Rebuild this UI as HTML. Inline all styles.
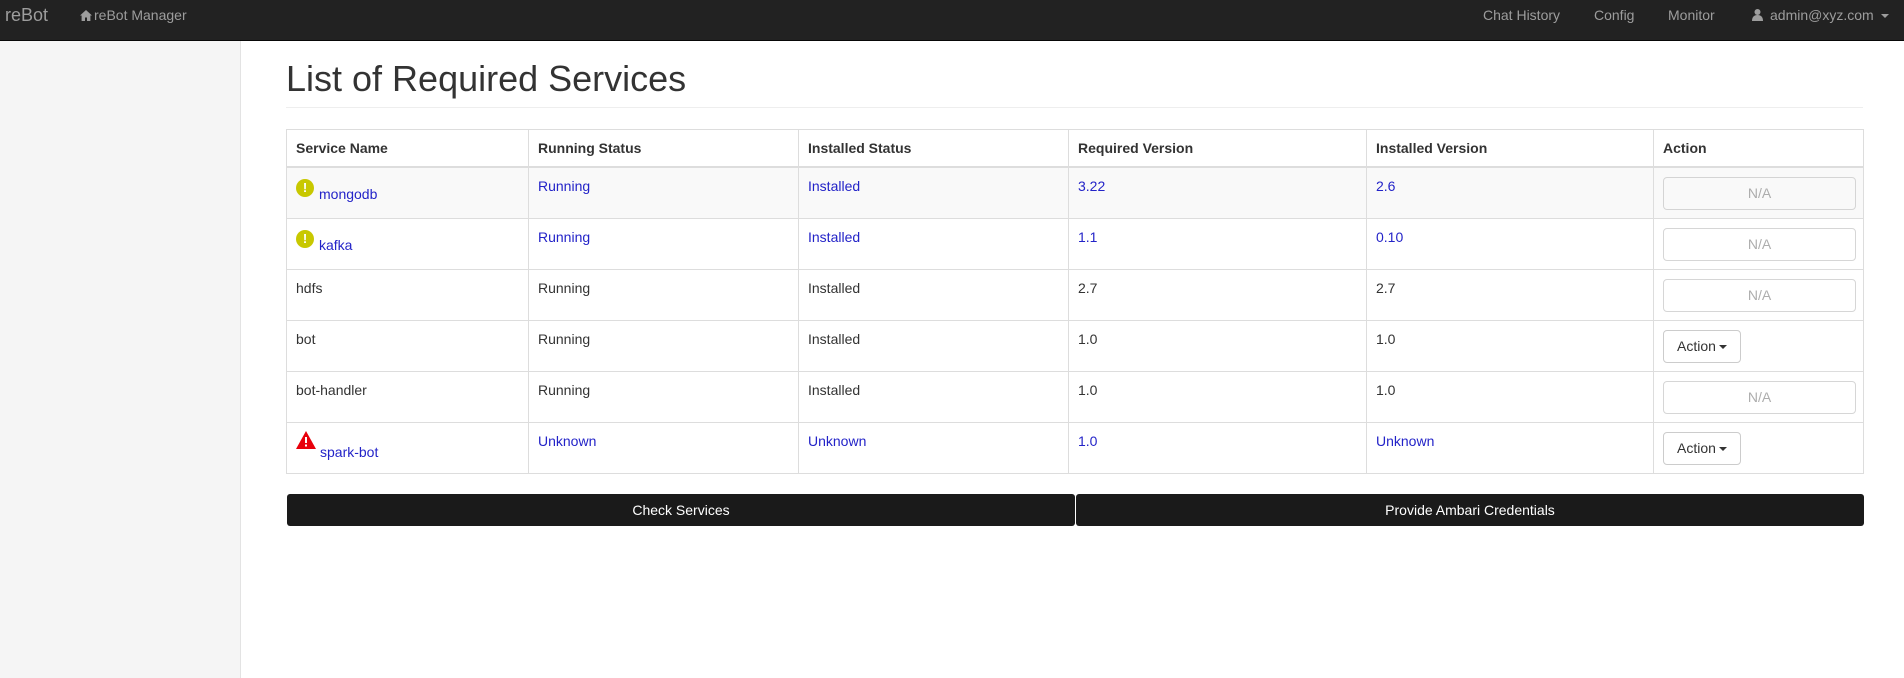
<!DOCTYPE html>
<html><head><meta charset="utf-8"><style>
*{box-sizing:border-box}
body{margin:0;width:1904px;height:678px;overflow:hidden;background:#fff;font-family:"Liberation Sans",Arial,sans-serif;font-size:14px;color:#333;position:relative}
.nav{position:absolute;left:0;top:0;width:1904px;height:41px;background:#222;border-bottom:1px solid #080808;color:#9d9d9d}
.nav span{position:absolute;top:0;line-height:30px}
.side{position:absolute;left:0;top:41px;width:241px;height:637px;background:#f5f5f5;border-right:1px solid #e3e3e3}
h1{position:absolute;left:286px;top:56px;margin:0;font-size:36px;font-weight:normal;line-height:46px;color:#333}
.hr{position:absolute;left:286px;top:107px;width:1577px;border-top:1px solid #eee}
table{position:absolute;left:286px;top:129px;width:1577px;border-collapse:collapse;table-layout:fixed}
td,th{border:1px solid #ddd;padding:8px 9px;text-align:left;vertical-align:top;line-height:20px}
th{height:36px;border-bottom:2px solid #ddd;font-weight:bold;padding-top:8px}
td{height:51px}
tr.s td{background:#f9f9f9}
a{color:#2323c8;text-decoration:none}
.ic{display:inline-block;width:18px;height:18px;border-radius:50%;background:#c8c800;color:#fff;font-weight:bold;font-size:13px;text-align:center;line-height:18px;margin-right:5px;vertical-align:-1px}
.nm{position:relative;top:8px}
.tri{display:inline-block;vertical-align:0px;margin-right:4px}
.na{display:block;width:193px;height:33px;border:1px solid #ccc;border-radius:4px;color:#999;text-align:center;line-height:31px;margin-top:1px;opacity:.8}
.ab{display:inline-block;height:33px;width:78px;border:1px solid #ccc;border-radius:4px;text-align:center;line-height:31px;color:#333;margin-top:1px}
.car{display:inline-block;border-left:4px solid transparent;border-right:4px solid transparent;border-top:4px solid #333;vertical-align:2px;margin-left:3px}
.btn{position:absolute;top:494px;height:32px;background:#1a1a1a;color:#fff;text-align:center;line-height:32px;border-radius:3px;font-size:14px}
</style></head><body>
<div class="nav">
<span style="left:5px;font-size:18px;line-height:30px">reBot</span>
<span style="left:80px"><svg width="12" height="11" viewBox="0 0 12 11" style="vertical-align:-1px;margin-right:2px"><path d="M6 0L0 5.5h1.6V11h3.4V7.5h2V11h3.4V5.5H12z" fill="#9d9d9d"/></svg>reBot Manager</span>
<span style="left:1483px">Chat History</span>
<span style="left:1594px">Config</span>
<span style="left:1668px">Monitor</span>
<span style="left:1752px"><svg width="11" height="12" viewBox="0 0 11 12" style="vertical-align:-1px;margin-right:7px"><circle cx="5.5" cy="3" r="3" fill="#9d9d9d"/><path d="M0 12c0-4 2-6 5.5-6s5.5 2 5.5 6z" fill="#9d9d9d"/></svg>admin@xyz.com <span class="car" style="border-top-color:#9d9d9d;position:static"></span></span>
</div>
<div class="side"></div>
<h1>List of Required Services</h1>
<div class="hr"></div>
<table>
<colgroup><col style="width:242px"><col style="width:270px"><col style="width:270px"><col style="width:298px"><col style="width:287px"><col style="width:210px"></colgroup>
<tr><th>Service Name</th><th>Running Status</th><th>Installed Status</th><th>Required Version</th><th>Installed Version</th><th>Action</th></tr>
<tr class="s"><td><span class="ic">!</span><a class="nm">mongodb</a></td><td><a>Running</a></td><td><a>Installed</a></td><td><a>3.22</a></td><td><a>2.6</a></td><td><span class="na">N/A</span></td></tr>
<tr><td><span class="ic">!</span><a class="nm">kafka</a></td><td><a>Running</a></td><td><a>Installed</a></td><td><a>1.1</a></td><td><a>0.10</a></td><td><span class="na">N/A</span></td></tr>
<tr class="s" style="background:none"><td style="background:#fff">hdfs</td><td style="background:#fff">Running</td><td style="background:#fff">Installed</td><td style="background:#fff">2.7</td><td style="background:#fff">2.7</td><td style="background:#fff"><span class="na">N/A</span></td></tr>
<tr><td>bot</td><td>Running</td><td>Installed</td><td>1.0</td><td>1.0</td><td><span class="ab">Action<span class="car"></span></span></td></tr>
<tr><td>bot-handler</td><td>Running</td><td>Installed</td><td>1.0</td><td>1.0</td><td><span class="na">N/A</span></td></tr>
<tr><td><svg class="tri" width="20" height="18" viewBox="0 0 20 18"><path d="M10 0L20 18H0z" fill="#e8000b"/><rect x="9" y="6" width="2" height="6" fill="#fff"/><rect x="9" y="13.5" width="2" height="2" fill="#fff"/></svg><a class="nm">spark-bot</a></td><td><a>Unknown</a></td><td><a>Unknown</a></td><td><a>1.0</a></td><td><a>Unknown</a></td><td><span class="ab">Action<span class="car"></span></span></td></tr>
</table>
<div class="btn" style="left:287px;width:788px">Check Services</div>
<div class="btn" style="left:1076px;width:788px">Provide Ambari Credentials</div>
</body></html>
